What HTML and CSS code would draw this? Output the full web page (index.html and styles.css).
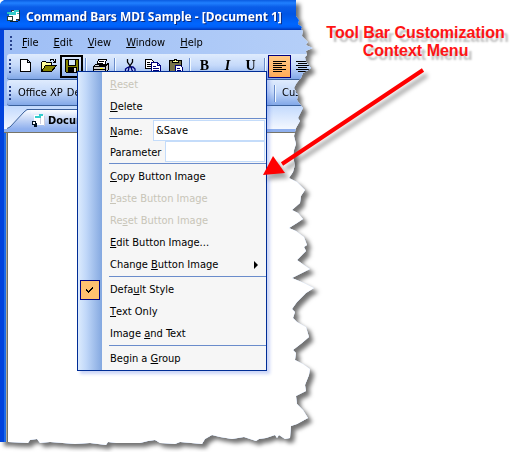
FILE: index.html
```html
<!DOCTYPE html>
<html lang="en">
<head>
<meta charset="utf-8">
<title>Command Bars MDI Sample</title>
<link rel="stylesheet" href="styles.css">
</head>
<body>
<main class="stage">
  <div class="shadow">
    <section class="window">
      <header class="titlebar">
        <svg class="app-icon" width="16" height="16" viewBox="0 0 16 16" shape-rendering="crispEdges"><path fill="#fff" stroke="#234" d="M5.5 1.5h8v9h-8z"/><path fill="#3cc" d="M3 3h7v3H3zM8 1h5v2H8z"/><path fill="#fff" d="M3 6h7v6H3z"/><path fill="#fff" stroke="#244" d="M1.5 7.5h5v4h-5z"/><path fill="#123" d="M4 12h8v1H4zM12 10h2v2h-2z"/><path fill="#2bb" d="M11 4h2v1h-2zM1 3h2v2H1z"/></svg>
        <h1>Command Bars MDI Sample - [Document 1]</h1>
      </header>
      <div class="frame">
        <nav class="menubar">
          <span class="grip"></span>
          <button><u>F</u>ile</button><button><u>E</u>dit</button><button><u>V</u>iew</button><button><u>W</u>indow</button><button><u>H</u>elp</button>
        </nav>
        <div class="toolbar icons">
          <span class="grip"></span>
          <button aria-label="New"><svg width="16" height="16" viewBox="0 0 16 16" shape-rendering="crispEdges"><path fill="#fff" stroke="#000" d="M2.500 1.500h7l3 3v9h-10zM9.500 1.500v3h3"/></svg></button>
          <button aria-label="Open"><svg width="16" height="16" viewBox="0 0 16 16" shape-rendering="crispEdges"><path fill="#ffff9c" stroke="#000" d="M.5 13.500v-9l1-1h3l1 1h5v3"/><path fill="#848200" stroke="#000" d="M.5 13.500l4-6h11l-5 6z"/><path fill="none" stroke="#000" d="M9 2.500l1-1h2l2 3M14.500 1v3.500h-3"/></svg></button>
          <button class="selected" aria-label="Save"><svg width="16" height="16" viewBox="0 0 16 16" shape-rendering="crispEdges"><path fill="#848200" stroke="#000" d="M1.500 1.500h13v13h-12l-1-1z"/><path fill="#d6e6fa" stroke="#000" d="M4.500 1.500h7v6h-7z"/><path d="M4 9h9v6H4z"/><path fill="#ddd" d="M10 10h2v4h-2z"/></svg></button>
          <span class="sep"></span>
          <button aria-label="Print"><svg width="16" height="16" viewBox="0 0 16 16" shape-rendering="crispEdges"><path fill="#fff" stroke="#000" d="M3.500 7.500l2-6h8l-2 6"/><path stroke="#000" d="M6 3.500h5M5 5.500h5"/><path fill="#ccc" stroke="#000" d="M.5 8.500l2-2h12l1-1v6l-3 3h-11l-1-1z"/><path stroke="#000" d="M1 8.500h11l3-3M12.500 9v5M1 11.500h11"/><path fill="#ff0" d="M7 10h3v1H7z"/></svg></button>
          <span class="sep"></span>
          <button aria-label="Cut"><svg width="16" height="16" viewBox="0 0 16 16"><path fill="none" stroke="#000" stroke-width="1.300" d="M5.500 1v3l4 6M10.500 1v3l-4 6"/><path fill="none" stroke="#00007b" stroke-width="1.300" d="M7 9L5.500 9.500 3.500 11v3h2l1-2zM9 9l1 3 1 2h2v-3l-2-2z"/></svg></button>
          <button aria-label="Copy"><svg width="16" height="16" viewBox="0 0 16 16" shape-rendering="crispEdges"><path fill="#fff" stroke="#000" d="M.5 1.500h6l2 2v7h-8z"/><path stroke="#000" d="M2 4.500h3M2 6.500h4M2 8.500h4"/><path fill="#fff" stroke="#00007b" d="M6.500 4.500h6l3 3v7h-9zM12.500 4.500v3h3"/><path stroke="#00007b" d="M8 8.500h3M8 10.500h6M8 12.500h6"/></svg></button>
          <button aria-label="Paste"><svg width="16" height="16" viewBox="0 0 16 16" shape-rendering="crispEdges"><path fill="#77734a" stroke="#000" d="M1.500 2.500h12v12h-12z"/><path fill="#ff9" stroke="#000" d="M4.500 4.500v-2h2v-1h2v1h2v2z"/><path fill="#fff" stroke="#00007b" d="M7.500 7.500h5l2 2v5h-7z"/><path stroke="#00007b" d="M9 10.500h3M9 12.500h4"/></svg></button>
          <span class="sep"></span>
          <button class="letter">B</button><button class="letter italic">I</button><button class="letter under">U</button>
          <span class="sep"></span>
          <button class="checked" aria-label="Align left"><svg width="16" height="16" viewBox="0 0 16 16" shape-rendering="crispEdges"><path stroke="#000" d="M1 3.500h13M1 5.500h9M1 7.500h13M1 9.500h9M1 11.500h13M1 13.500h9"/></svg></button>
          <button aria-label="Center"><svg width="16" height="16" viewBox="0 0 16 16" shape-rendering="crispEdges"><path stroke="#000" d="M1 3.500h13M3 5.500h9M1 7.500h13M3 9.500h9M1 11.500h13M3 13.500h9"/></svg></button>
        </div>
        <div class="toolbar styles">
          <span class="grip"></span>
          <button>Office XP</button><button>Default</button>
          <span class="spacer"></span>
          <span class="sep"></span>
          <button class="custom">Custom</button>
        </div>
        <div class="tabs">
          <svg class="tab-slope" width="24" height="20" viewBox="0 0 24 20"><defs><linearGradient id="tab" x2="0" y2="1"><stop stop-color="#fff"/><stop offset="1" stop-color="#8fb0ee"/></linearGradient></defs><path fill="url(#tab)" d="M0 20L3 18 17 3 24 0V20z"/><path fill="none" stroke="#3b619c" d="M0 19.500L3 18 17 3 20 .5H24"/></svg>
          <button class="tab"><svg width="16" height="16" viewBox="0 0 16 16" shape-rendering="crispEdges"><path fill="#fff" d="M3 2h10v10H3z"/><path fill="#3cc" d="M4 3h6v2H4zM8 1h4v2H8z"/><path fill="#ccd" d="M13 3h1v10h-1zM9 5h1v6H9z"/><path fill="#fff" stroke="#012" d="M1.500 8.500h3v3h-3z"/><path fill="#012" d="M4 10h2v4H4zM3 12h2v2H3z"/></svg>Document 1</button>
        </div>
        <div class="document"></div>
      </div>
    </section>
  </div>

  <form class="menu">
    <button type="button" disabled><u>R</u>eset</button>
    <button type="button"><u>D</u>elete</button>
    <hr>
    <div class="field"><label for="name"><u>N</u>ame:</label><input id="name" class="name" value="&amp;Save"></div>
    <div class="field"><label for="parameter">Parameter</label><input id="parameter"></div>
    <hr>
    <button type="button"><u>C</u>opy Button Image</button>
    <button type="button" disabled><u>P</u>aste Button Image</button>
    <button type="button" disabled>Re<u>s</u>et Button Image</button>
    <button type="button"><u>E</u>dit Button Image...</button>
    <button type="button" class="submenu">Change <u>B</u>utton Image<svg width="4" height="8" viewBox="0 0 4 8"><path d="M0 0v8l4-4z"/></svg></button>
    <hr>
    <button type="button" class="ticked"><span class="tick"><svg width="8" height="8" viewBox="0 0 8 8" shape-rendering="crispEdges"><path d="M0 3h1v1h1v1h1V4h1V3h1V2h1V1h1v2H6v1H5v1H4v1H3v1H2V6H1V5H0z"/></svg></span>Defa<u>u</u>lt Style</button>
    <button type="button"><u>T</u>ext Only</button>
    <button type="button">Image <u>a</u>nd Text</button>
    <hr>
    <button type="button">Begin a <u>G</u>roup</button>
  </form>

  <aside class="callout">
    <p>Tool Bar Customization<br>Context Menu</p>
  </aside>
  <svg class="arrow" width="170" height="115" viewBox="0 0 170 115"><path stroke="#f00" stroke-width="4" d="M161 4L20 98"/><path fill="#f00" d="M1 109L11 90 23 107z"/></svg>
</main>
</body>
</html>
```
FILE: styles.css
```css
* { box-sizing: border-box; }
body {
  margin: 0;
  background: #fff;
  color: #000;
  font: 11px/14px "DejaVu Sans Condensed", "Noto Sans", sans-serif;
}
button, input {
  font: inherit;
  color: inherit;
  border: 0;
  margin: 0;
  padding: 0;
  background: none;
}
button { white-space: nowrap; }
u { text-underline-offset: 1px; }

.stage {
  position: relative;
  display: flex;
  align-items: flex-start;
  min-height: 100vh;
}
.shadow {
  flex: 0 0 62%;
  min-width: 0;
  filter: drop-shadow(4px 4px 2px rgba(0, 0, 0, .55));
}

/* Window with a torn right and bottom edge */
.window {
  display: flex;
  flex-direction: column;
  min-height: 448px;
  background: #fff;
  clip-path: polygon(0 4px, 1px 2px, 4px 0, 296px 0, 296px 16px, 299px 20px, 298px 24px, 302px 27px, 301px 29px, 303px 31px, 302px 36px, 308px 42px, 306px 45px, 313px 48px, 306px 51px, 307px 55px, 305px 57px, 306px 62px, 311px 68px, 307px 71px, 303px 73px, 301px 78px, 299px 80px, 296px 84px, 294px 88px, 298px 95px, 297px 100px, 299px 103px, 303px 108px, 301px 112px, 298px 118px, 300px 121px, 296px 128px, 294px 136px, 296px 144px, 294px 150px, 293px 157px, 295px 165px, 293px 172px, 289px 178px, 297px 182px, 305px 190px, 301px 196px, 300px 203px, 292px 210px, 298px 213px, 303px 219px, 297px 223px, 289px 228px, 296px 231px, 304px 237px, 307px 245px, 304px 247px, 306px 251px, 297px 260px, 304px 265px, 310px 269px, 292px 278px, 304px 283px, 314px 288px, 306px 293px, 297px 302px, 292px 309px, 295px 312px, 293px 318px, 297px 322px, 306px 327px, 309px 337px, 302px 343px, 293px 350px, 296px 353px, 295px 360px, 303px 364px, 310px 369px, 309px 375px, 305px 385px, 306px 391px, 296px 396px, 297px 404px, 303px 410px, 308px 418px, 297px 424px, 291px 426px, 290px 438px, 285px 439px, 279px 435px, 277px 438px, 275px 435px, 266px 438px, 259px 439px, 256px 441px, 244px 437px, 232px 439px, 220px 437px, 212px 435px, 205px 439px, 202px 444px, 180px 442px, 175px 444px, 160px 443px, 155px 440px, 148px 441px, 140px 443px, 116px 443px, 108px 442px, 106px 445px, 90px 443px, 75px 444px, 50px 442px, 40px 443px, 37px 439px, 30px 440px, 28px 443px, 8px 442px, 0 442px);
}
.titlebar {
  display: flex;
  align-items: center;
  gap: 4px;
  height: 30px;
  padding: 4px 0 0 6px;
  background: linear-gradient(#0a5be0, #2080ff 3px, #0a5de8 7px, #0055e5 14px, #0066ff 24px, #0060f8 27px, #0036b8);
}
.app-icon { flex: none; }
.titlebar h1 {
  margin: 0;
  color: #fff;
  font: bold 12px/18px "Noto Sans", sans-serif;
  text-shadow: 1px 1px 0 #0a2a80;
  white-space: nowrap;
}
.frame {
  flex: 1;
  display: flex;
  flex-direction: column;
  border-left: 4px solid #0042dc;
  background: linear-gradient(90deg, #9ebef5, #b5cff8);
}
.grip {
  flex: none;
  width: 2px;
  height: 14px;
  margin: 0 4px 0 5px;
  background: repeating-linear-gradient(#27418c 0 2px, transparent 2px 4px);
}
.menubar {
  display: flex;
  align-items: center;
  height: 24px;
  padding: 2px 0 0 1px;
}
.menubar button { margin: 0 9px 0 6px; }
.toolbar {
  display: flex;
  align-items: center;
  height: 26px;
  margin-left: 3px;
  padding-bottom: 1px;
  border-bottom: 1px solid #3b619c;
  border-radius: 3px 0 0 3px;
  background: linear-gradient(#dfebfd, #c6dafa 45%, #82a8e8);
}
.toolbar .grip { margin: 0 3px 0 2px; }
.icons button {
  flex: none;
  display: grid;
  place-items: center;
  width: 23px;
  height: 23px;
}
.sep {
  flex: none;
  width: 2px;
  height: 17px;
  margin: 0 2px;
  background: linear-gradient(90deg, #6a8ccb 1px, #f1f9ff 1px);
}
.icons .selected { border: 2px solid #000; }
.icons .checked { border: 1px solid #00007f; background: linear-gradient(#ffc987, #ffac58); }
.icons .letter { font: bold 14px/16px "Liberation Serif", serif; }
.icons .italic { font-style: italic; }
.icons .under { text-decoration: underline; }
.styles { padding-top: 2px; }
.styles button { margin: 0 0 0 4px; }
.spacer { flex: 1; }
.styles .custom {
  flex: 0 0 36px;
  min-width: 0;
  text-align: left;
}
.tabs {
  display: flex;
  align-items: flex-end;
  height: 26px;
  padding: 4px 0 0 3px;
  border-bottom: 3px solid #8fb0ee;
  background: linear-gradient(#c3dafd, #f4f8ff);
}
.tab {
  display: flex;
  align-items: center;
  gap: 1px;
  height: 20px;
  padding: 2px 8px 0 0;
  border-top: 1px solid #3b619c;
  border-right: 1px solid #3b619c;
  background: linear-gradient(#fff, #8fb0ee);
  font-weight: bold;
}
.tab-slope { flex: none; }
.document {
  flex: 1;
  border-top: 1px solid #777568;
  background: linear-gradient(90deg, #1c6ae8 2px, #aca899 2px 3px, #716f64 3px 4px, #fff 4px);
}

/* Context menu floating over the window */
.menu {
  position: absolute;
  left: 77px;
  top: 71px;
  width: 190px;
  padding: 1px 0 1px 1px;
  border: 1px solid #002d96;
  background: linear-gradient(90deg, #dcebfd, #c1d8f9 8px, #84a8e0 24px, #f6f6f6 24px);
  box-shadow: 3px 3px 3px rgba(90, 120, 230, .3);
}
.menu > button {
  display: flex;
  align-items: center;
  width: 100%;
  height: 22px;
  padding: 2px 8px 0 31px;
  white-space: pre;
}
.menu > button:disabled { color: #c8c5b8; }
.menu hr {
  height: 1px;
  margin: 1px 0 1px 30px;
  border: 0;
  background: #6a8ccb;
}
.field {
  display: flex;
  align-items: center;
  justify-content: space-between;
  height: 21px;
  padding: 0 1px 0 31px;
}
.field label { padding-top: 2px; }
.field input {
  width: 100px;
  height: 21px;
  padding: 0 2px;
  border: 1px solid #c4dcfa;
  background: #fff;
}
.field .name { width: 112px; }
.submenu svg { margin-left: auto; }
.menu .ticked { padding-left: 1px; }
.tick {
  display: grid;
  place-items: center;
  width: 20px;
  height: 20px;
  margin-right: 10px;
  border: 1px solid #00007f;
  background: #ffc06f;
}

.callout {
  flex: 1;
  padding: 24px 0 0;
  color: #ff1414;
  font: bold 16px/18px "Liberation Sans", sans-serif;
  text-align: center;
  text-shadow: 4px 4px 2px rgba(0, 0, 0, .25);
}
.callout p { margin: 0; white-space: nowrap; }
.arrow {
  position: absolute;
  left: 262px;
  top: 66px;
  filter: drop-shadow(4px 5px 2px rgba(0, 0, 0, .35));
}
```
